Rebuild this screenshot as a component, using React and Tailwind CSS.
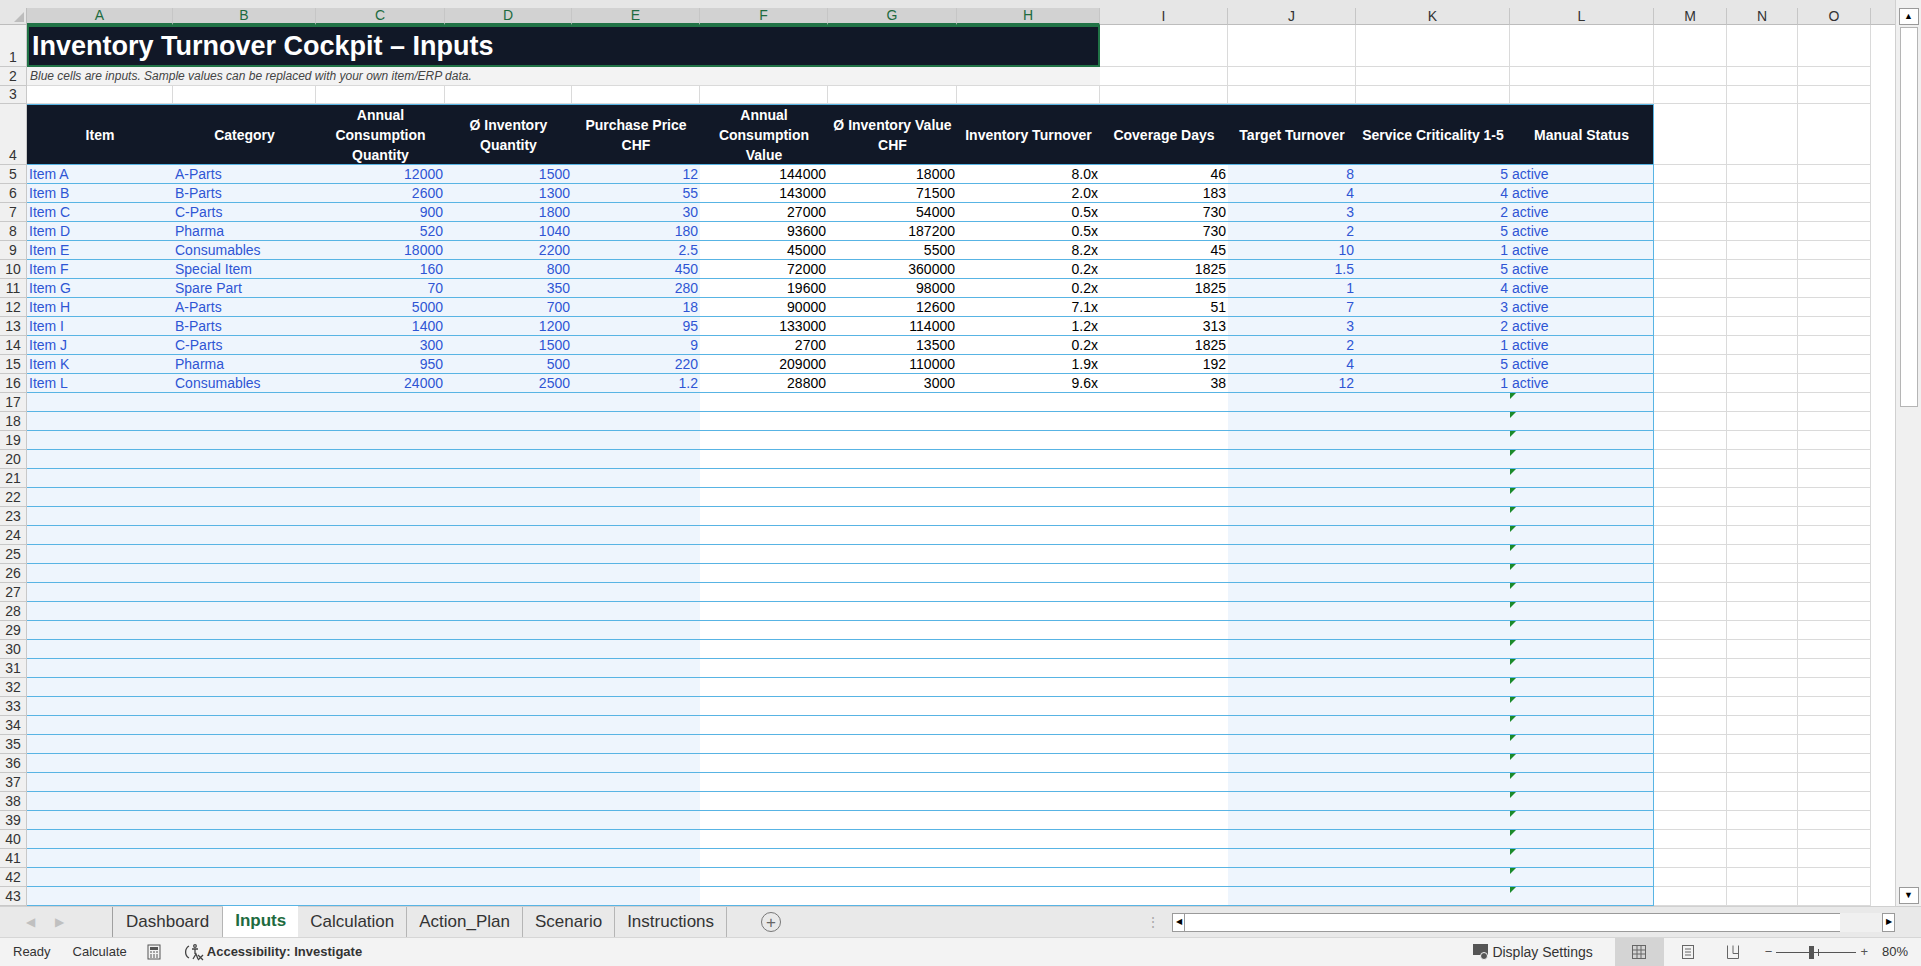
import React from 'react';

const cols = [
  { k: 'A', w: 'w-[146px]', sel: true },
  { k: 'B', w: 'w-[143px]', sel: true },
  { k: 'C', w: 'w-[129px]', sel: true },
  { k: 'D', w: 'w-[127px]', sel: true },
  { k: 'E', w: 'w-[128px]', sel: true },
  { k: 'F', w: 'w-[128px]', sel: true },
  { k: 'G', w: 'w-[129px]', sel: true },
  { k: 'H', w: 'w-[143px]', sel: true },
  { k: 'I', w: 'w-[128px]' },
  { k: 'J', w: 'w-[128px]' },
  { k: 'K', w: 'w-[154px]' },
  { k: 'L', w: 'w-[144px]' },
  { k: 'M', w: 'w-[73px]' },
  { k: 'N', w: 'w-[71px]' },
  { k: 'O', w: 'w-[73px]' },
];

const headers = ['Item', 'Category', 'Annual Consumption Quantity', 'Ø Inventory Quantity', 'Purchase Price CHF', 'Annual Consumption Value', 'Ø Inventory Value CHF', 'Inventory Turnover', 'Coverage Days', 'Target Turnover', 'Service Criticality 1-5', 'Manual Status'];

const data = [
  ['Item A', 'A-Parts', '12000', '1500', '12', '144000', '18000', '8.0x', '46', '8', '5', 'active'],
  ['Item B', 'B-Parts', '2600', '1300', '55', '143000', '71500', '2.0x', '183', '4', '4', 'active'],
  ['Item C', 'C-Parts', '900', '1800', '30', '27000', '54000', '0.5x', '730', '3', '2', 'active'],
  ['Item D', 'Pharma', '520', '1040', '180', '93600', '187200', '0.5x', '730', '2', '5', 'active'],
  ['Item E', 'Consumables', '18000', '2200', '2.5', '45000', '5500', '8.2x', '45', '10', '1', 'active'],
  ['Item F', 'Special Item', '160', '800', '450', '72000', '360000', '0.2x', '1825', '1.5', '5', 'active'],
  ['Item G', 'Spare Part', '70', '350', '280', '19600', '98000', '0.2x', '1825', '1', '4', 'active'],
  ['Item H', 'A-Parts', '5000', '700', '18', '90000', '12600', '7.1x', '51', '7', '3', 'active'],
  ['Item I', 'B-Parts', '1400', '1200', '95', '133000', '114000', '1.2x', '313', '3', '2', 'active'],
  ['Item J', 'C-Parts', '300', '1500', '9', '2700', '13500', '0.2x', '1825', '2', '1', 'active'],
  ['Item K', 'Pharma', '950', '500', '220', '209000', '110000', '1.9x', '192', '4', '5', 'active'],
  ['Item L', 'Consumables', '24000', '2500', '1.2', '28800', '3000', '9.6x', '38', '12', '1', 'active'],
];

const isInput = (i) => i <= 4 || i >= 9;

function RowHead({ n, h }) {
  return (
    <div className={`w-[27px] shrink-0 ${h} bg-[#f0f0f0] border-r border-b border-[#c8c8c8] text-[#333] text-[14px] flex items-end justify-center leading-[18px]`}>
      {n}
    </div>
  );
}

function Grid({ c, h, children }) {
  return <div className={`${c.w} shrink-0 ${h} border-r border-b border-[#dadada]`}>{children}</div>;
}

function BodyRow({ n, row }) {
  return (
    <div className="flex">
      <RowHead n={n} h="h-[19px]" />
      {cols.slice(0, 12).map((c, i) => {
        const input = isInput(i);
        const align = i <= 1 || i === 11 ? 'justify-start pl-[2px]' : 'justify-end pr-[2px]';
        return (
          <div
            key={c.k}
            className={`${c.w} shrink-0 h-[19px] relative flex items-center ${align} border-b border-[#58b4e4] ${input ? 'bg-[#eef5fd] text-[#2f55d4]' : 'bg-white text-black'} ${i === 11 ? 'border-r' : ''} text-[14px] leading-none whitespace-nowrap`}
          >
            {row ? row[i] : ''}
            {!row && i === 11 && (
              <span className="absolute left-0 top-0 w-0 h-0 border-t-[6px] border-t-[#1a8a2a] border-r-[6px] border-r-transparent" />
            )}
          </div>
        );
      })}
      {cols.slice(12).map((c) => (
        <Grid key={c.k} c={c} h="h-[19px]" />
      ))}
    </div>
  );
}

export default function App() {
  const font = { fontFamily: '"Liberation Sans", Arial, sans-serif' };
  return (
    <div className="w-[1921px] h-[966px] overflow-hidden bg-white flex flex-col" style={font}>
      <div className="flex flex-1 min-h-0">
        <div className="w-[1895px] flex flex-col">
          <div className="h-[8px] bg-[#e6e6e6]" />
          {/* column headers */}
          <div className="flex h-[17px]">
            <div className="w-[27px] shrink-0 bg-[#e6e6e6] border-r border-b border-[#bdbdbd] relative">
              <span className="absolute right-[2px] bottom-[2px] w-0 h-0 border-b-[10px] border-b-[#bdbdbd] border-l-[10px] border-l-transparent" />
            </div>
            {cols.map((c) => (
              <div
                key={c.k}
                className={`${c.w} shrink-0 flex items-center justify-center text-[14px] border-r border-[#c6c6c6] ${c.sel ? 'bg-[#d2d2d2] text-[#1e6b40] border-b-2 border-b-[#217346]' : 'bg-[#e6e6e6] text-[#333] border-b border-b-[#bdbdbd]'}`}
              >
                {c.k}
              </div>
            ))}
            <div className="flex-1 bg-[#e6e6e6] border-b border-[#bdbdbd]" />
          </div>
          {/* row 1 */}
          <div className="flex">
            <RowHead n="1" h="h-[42px]" />
            <div className="w-[1073px] shrink-0 h-[42px] bg-[#111827] border-2 border-[#217346] flex items-center pl-[3px] text-white font-bold text-[27px]">
              Inventory Turnover Cockpit – Inputs
            </div>
            {cols.slice(8).map((c) => (
              <Grid key={c.k} c={c} h="h-[42px]" />
            ))}
          </div>
          {/* row 2 */}
          <div className="flex">
            <RowHead n="2" h="h-[19px]" />
            <div className="w-[1073px] shrink-0 h-[19px] bg-[#f3f3f3] border-b border-[#dadada] flex items-center pl-[3px] italic text-[12px] text-[#444]">
              Blue cells are inputs. Sample values can be replaced with your own item/ERP data.
            </div>
            {cols.slice(8).map((c) => (
              <Grid key={c.k} c={c} h="h-[19px]" />
            ))}
          </div>
          {/* row 3 */}
          <div className="flex">
            <RowHead n="3" h="h-[18px]" />
            {cols.map((c) => (
              <Grid key={c.k} c={c} h="h-[18px]" />
            ))}
          </div>
          {/* row 4 headers */}
          <div className="flex">
            <RowHead n="4" h="h-[61px]" />
            {cols.slice(0, 12).map((c, i) => (
              <div
                key={c.k}
                className={`${c.w} shrink-0 h-[61px] bg-[#111827] border-t border-b border-[#58b4e4] ${i === 11 ? 'border-r' : ''} flex items-center justify-center text-center text-white font-bold text-[14px] leading-[20px] px-[4px]`}
              >
                {headers[i]}
              </div>
            ))}
            {cols.slice(12).map((c) => (
              <Grid key={c.k} c={c} h="h-[61px]" />
            ))}
          </div>
          {Array.from({ length: 39 }).map((_, i) => (
            <BodyRow key={i} n={i + 5} row={data[i]} />
          ))}
        </div>
        {/* vertical scrollbar */}
        <div className="w-[26px] bg-[#f0f0f0] border-l border-[#d0d0d0] flex flex-col items-center pt-[8px]">
          <div className="w-[20px] h-[17px] bg-white border border-[#9a9a9a] flex items-center justify-center text-[9px] text-black">▲</div>
          <div className="w-[18px] h-[380px] bg-white border border-[#b5b5b5] mt-[2px]" />
          <div className="flex-1" />
          <div className="w-[20px] h-[17px] bg-white border border-[#9a9a9a] flex items-center justify-center text-[9px] text-black mb-[2px]">▼</div>
        </div>
      </div>
      {/* tabs bar */}
      <div className="h-[31px] bg-[#e9e9e9] border-t border-[#d0d0d0] flex items-center text-[17px] text-[#333]">
        <div className="w-[112px] flex items-center gap-[20px] pl-[26px] text-[#c0c0c0] text-[12px]">
          <span>◀</span><span>▶</span>
        </div>
        <div className="h-full flex items-stretch border-l border-[#a0a0a0] my-[4px]">
          <div className="px-[13px] flex items-center border-r border-[#b5b5b5]">Dashboard</div>
          <div className="px-[12px] flex items-center bg-white text-[#1e6b40] font-bold border-b-2 border-[#217346] -mt-[4px] mb-[-4px]">Inputs</div>
          <div className="px-[12px] flex items-center border-r border-[#b5b5b5]">Calculation</div>
          <div className="px-[12px] flex items-center border-r border-[#b5b5b5]">Action_Plan</div>
          <div className="px-[12px] flex items-center border-r border-[#b5b5b5]">Scenario</div>
          <div className="px-[12px] flex items-center border-r border-[#b5b5b5]">Instructions</div>
        </div>
        <div className="ml-[34px] w-[20px] h-[20px] rounded-full border border-[#777] flex items-center justify-center text-[#666] text-[17px] leading-none">+</div>
        <div className="flex-1" />
        <div className="text-[#aaa] text-[14px] mr-[12px]">⋮</div>
        <div className="w-[723px] h-[19px] flex items-center mr-[26px]">
          <div className="w-[13px] h-full bg-white border border-[#9a9a9a] flex items-center justify-center text-[8px] text-black">◀</div>
          <div className="flex-1 h-full bg-white border-y border-[#9a9a9a] w-[640px]" />
          <div className="w-[42px] h-full bg-[#f0f0f0]" />
          <div className="w-[13px] h-full bg-white border border-[#9a9a9a] flex items-center justify-center text-[8px] text-black">▶</div>
        </div>
      </div>
      {/* status bar */}
      <div className="h-[29px] bg-[#f3f3f3] border-t border-[#d6d6d6] flex items-center text-[13px] text-[#333]">
        <span className="ml-[13px]">Ready</span>
        <span className="ml-[22px]">Calculate</span>
        <svg className="ml-[20px]" width="14" height="16" viewBox="0 0 14 16">
          <rect x="1" y="1" width="12" height="14" fill="none" stroke="#555" />
          <rect x="3" y="3" width="8" height="3" fill="#555" />
          <path d="M3 8h2M6 8h2M9 8h2M3 11h2M6 11h2M9 11h2M3 13h2M6 13h2M9 13h2" stroke="#555" />
        </svg>
        <svg className="ml-[24px]" width="20" height="18" viewBox="0 0 20 18" fill="none" stroke="#444" strokeWidth="1.3">
          <path d="M4 3a7 7 0 0 0 0 12" />
          <circle cx="10" cy="3" r="1.3" />
          <path d="M7 6h6M10 6v5M8 16l3-5 2 5" />
          <path d="M13 12l5 5M18 12l-5 5" />
        </svg>
        <span className="ml-[2px] font-bold">Accessibility: Investigate</span>
        <div className="flex-1" />
        <svg width="18" height="18" viewBox="0 0 18 18">
          <rect x="1" y="1" width="15" height="11" fill="#555" />
          <circle cx="12" cy="13" r="3.5" fill="#555" stroke="#f3f3f3" />
        </svg>
        <span className="ml-[2px] mr-[22px] text-[14px]">Display Settings</span>
        <div className="w-[49px] h-[29px] bg-[#d4d4d4] flex items-center justify-center">
          <svg width="16" height="16" viewBox="0 0 16 16" fill="none" stroke="#666">
            <rect x="1.5" y="1.5" width="13" height="13" />
            <path d="M1.5 6h13M1.5 10h13M6 1.5v13M10 1.5v13" />
          </svg>
        </div>
        <div className="w-[49px] flex items-center justify-center">
          <svg width="14" height="16" viewBox="0 0 14 16" fill="none" stroke="#666">
            <rect x="1.5" y="1.5" width="11" height="13" />
            <path d="M4 5h6M4 8h6M4 11h6" />
          </svg>
        </div>
        <div className="w-[40px] flex items-center justify-center">
          <svg width="14" height="16" viewBox="0 0 14 16" fill="none" stroke="#666">
            <path d="M1.5 1.5v13h11v-13M7 1.5v8h5.5" />
          </svg>
        </div>
        <span className="ml-[12px] text-[#555]">−</span>
        <div className="relative w-[80px] h-[1px] bg-[#555] mx-[4px]">
          <div className="absolute left-[33px] -top-[6px] w-[5px] h-[13px] bg-[#555]" />
          <div className="absolute left-[42px] -top-[3px] w-[1px] h-[7px] bg-[#555]" />
        </div>
        <span className="text-[#555]">+</span>
        <span className="ml-[14px] mr-[13px]">80%</span>
      </div>
    </div>
  );
}
